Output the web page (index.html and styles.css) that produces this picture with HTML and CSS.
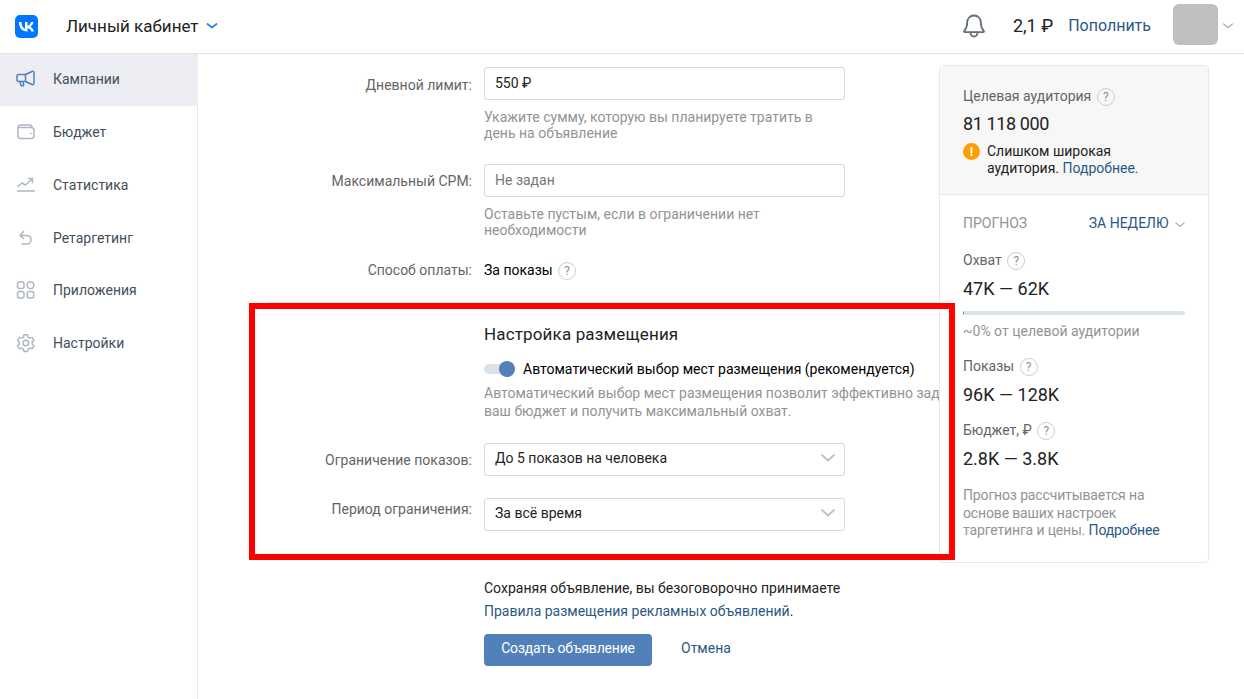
FILE: index.html
```html
<!DOCTYPE html>
<html lang="ru">
<head>
  <meta charset="UTF-8" />
  <meta name="viewport" content="width=device-width, initial-scale=1.0" />
  <title>Личный кабинет</title>
  <link rel="stylesheet" href="styles.css">
</head>
<body>
  <header class="topbar">
    <div class="brand">
      <svg class="vk-logo" width="23" height="23" viewBox="0 0 23 23">
        <rect width="23" height="23" rx="5" fill="#0077ff"/>
        <path d="M12.2 16.6c-5.2 0-8.2-3.6-8.3-9.500h2.600c.1 4.400 2 6.200 3.500 6.600V7.100h2.500v3.800c1.500-.2 3-1.900 3.500-3.800h2.500c-.4 2.300-2.100 4-3.300 4.700 1.200.6 3.100 2 3.900 4.800h-2.700c-.6-1.800-2-3.200-3.900-3.400v3.400z" fill="#fff"/>
      </svg>
      <span class="brand-title">Личный кабинет</span>
      <svg class="chevron" width="12" height="8" viewBox="0 0 12 8"><path d="M1.500 2l4.500 3.500L10.500 2" fill="none" stroke="#2b87e0" stroke-width="1.800" stroke-linecap="round"/></svg>
    </div>
    <div class="account">
      <svg class="bell" width="24" height="24" viewBox="0 0 24 24" fill="none" stroke="#626d7a" stroke-width="1.800" stroke-linejoin="round">
        <path d="M12 1.500c-4 0-6.800 3-6.800 7 0 4.500-1 6.200-3 8.500-.4.500-.1 1.100.5 1.100h18.600c.6 0 .9-.6.500-1.100-2-2.300-3-4-3-8.500 0-4-2.800-7-6.800-7z"/>
        <path d="M8.500 18.500c0 2.200 1.500 4 3.500 4s3.500-1.800 3.500-4" stroke-linecap="round"/>
      </svg>
      <span class="balance">2,1 ₽</span>
      <a class="top-up" href="#">Пополнить</a>
      <div class="avatar"></div>
      <svg class="chevron" width="12" height="8" viewBox="0 0 12 8"><path d="M1.500 2l4.500 3.500L10.500 2" fill="none" stroke="#aeb7c2" stroke-width="1.500" stroke-linecap="round"/></svg>
    </div>
  </header>

  <div class="layout">
    <nav class="sidebar">
      <a class="nav-item active" href="#">
        <svg width="22" height="22" viewBox="0 0 22 22" fill="none" stroke="#5181b8" stroke-width="1.500" stroke-linejoin="round" stroke-linecap="round">
          <path d="M2 8.500c0-1.300.9-2 2-2h6.500L17 3.500c1-.4 2 .1 2 1.200v10.600c0 1.100-1 1.600-2 1.200l-6.500-3H4c-1.100 0-2-.7-2-2z"/>
          <path d="M10.500 6.500v7M5 13.500l.8 3.500c.1.500.5.700 1 .7h1c.6 0 .9-.4.800-1l-.6-3.200"/>
        </svg>
        <span>Кампании</span>
      </a>
      <a class="nav-item" href="#">
        <svg width="22" height="22" viewBox="0 0 22 22" fill="none" stroke="#aeb7c2" stroke-width="1.500" stroke-linejoin="round" stroke-linecap="round">
          <path d="M3 6.500C3 5 4 4 5.500 4h9C16 4 17 5 17 6.500M3 6.500v8C3 16.500 4 17.500 6 17.500h10c1.500 0 3-1 3-3v-5c0-2-1.500-3-3-3z"/>
          <path d="M15.500 12.500h.5"/>
        </svg>
        <span>Бюджет</span>
      </a>
      <a class="nav-item" href="#">
        <svg width="22" height="22" viewBox="0 0 22 22" fill="none" stroke="#aeb7c2" stroke-width="1.500" stroke-linejoin="round" stroke-linecap="round">
          <path d="M3 12.500l4-3.500 3.500 2 6.500-6M13.500 4.500H17.500V8.500M2.500 17h17"/>
        </svg>
        <span>Статистика</span>
      </a>
      <a class="nav-item" href="#">
        <svg width="22" height="22" viewBox="0 0 22 22" fill="none" stroke="#aeb7c2" stroke-width="1.500" stroke-linejoin="round" stroke-linecap="round">
          <path d="M8.500 4.500L5 8.500l3.500 3M5.500 8.500h6.500c2.500 0 4 1.500 4 4s-1.800 4.500-4 4.500H7"/>
        </svg>
        <span>Ретаргетинг</span>
      </a>
      <a class="nav-item" href="#">
        <svg width="22" height="22" viewBox="0 0 22 22" fill="none" stroke="#aeb7c2" stroke-width="1.500">
          <rect x="2.500" y="3" width="6.500" height="6.500" rx="2"/>
          <circle cx="15.500" cy="6.200" r="3.400"/>
          <rect x="2.500" y="12.500" width="6.500" height="6.500" rx="2"/>
          <rect x="12.200" y="12.500" width="6.500" height="6.500" rx="2"/>
        </svg>
        <span>Приложения</span>
      </a>
      <a class="nav-item" href="#">
        <svg width="22" height="22" viewBox="0 0 22 22" fill="none" stroke="#aeb7c2" stroke-width="1.500" stroke-linejoin="round">
          <path d="M9 2.800h3.500l.6 2.300 1.700 1 2.300-.7 1.800 3-1.700 1.700v2l1.700 1.700-1.800 3-2.300-.7-1.700 1-.6 2.300H9l-.6-2.300-1.700-1-2.300.7-1.800-3L4.300 12v-2L2.600 8.400l1.800-3 2.300.7 1.700-1z"/>
          <circle cx="10.800" cy="11" r="2.800"/>
        </svg>
        <span>Настройки</span>
      </a>
    </nav>

    <main class="content">
      <div class="form">
        <div class="form-row">
          <label class="form-label label-low">Дневной лимит:</label>
          <div class="form-field">
            <div class="input">550 ₽</div>
            <p class="hint">Укажите сумму, которую вы планируете тратить в<br>день на объявление</p>
          </div>
        </div>
        <div class="form-row">
          <label class="form-label">Максимальный CPM:</label>
          <div class="form-field">
            <div class="input placeholder">Не задан</div>
            <p class="hint">Оставьте пустым, если в ограничении нет<br>необходимости</p>
          </div>
        </div>
        <div class="form-row pay-row">
          <label class="form-label">Способ оплаты:</label>
          <div class="form-field">За показы <span class="help">?</span></div>
        </div>

        <div class="placement">
          <div class="form-row intro-row">
            <div class="form-label"></div>
            <div class="form-field">
              <h3 class="section-title">Настройка размещения</h3>
              <div class="switch-row">
                <span class="switch"><span class="switch-knob"></span></span>
                Автоматический выбор мест размещения (рекомендуется)
              </div>
              <p class="hint wide">Автоматический выбор мест размещения позволит эффективно зад<br>ваш бюджет и получить максимальный охват.</p>
            </div>
          </div>
          <div class="form-row select-row">
            <label class="form-label">Ограничение показов:</label>
            <div class="form-field">
              <div class="input select">До 5 показов на человека
                <svg width="16" height="10" viewBox="0 0 16 10"><path d="M2 2l6 5.500L14 2" fill="none" stroke="#b8c1cc" stroke-width="1.800" stroke-linecap="round"/></svg>
              </div>
            </div>
          </div>
          <div class="form-row select-row">
            <label class="form-label label-high">Период ограничения:</label>
            <div class="form-field">
              <div class="input select">За всё время
                <svg width="16" height="10" viewBox="0 0 16 10"><path d="M2 2l6 5.500L14 2" fill="none" stroke="#b8c1cc" stroke-width="1.800" stroke-linecap="round"/></svg>
              </div>
            </div>
          </div>
        </div>

        <div class="form-row submit-row">
          <div class="form-label"></div>
          <div class="form-field">
            <p class="terms">Сохраняя объявление, вы безоговорочно принимаете<br><a href="#">Правила размещения рекламных объявлений</a>.</p>
            <div class="actions">
              <button class="btn-primary">Создать объявление</button>
              <a class="cancel" href="#">Отмена</a>
            </div>
          </div>
        </div>
      </div>

      <aside class="forecast">
        <div class="audience">
          <div class="metric-title">Целевая аудитория <span class="help">?</span></div>
          <div class="audience-count">81 118 000</div>
          <div class="warning">
            <span class="warning-icon">!</span>
            <span>Слишком широкая<br>аудитория. <a href="#">Подробнее.</a></span>
          </div>
        </div>
        <div class="prediction">
          <div class="prediction-head">
            <span>ПРОГНОЗ</span>
            <a href="#">ЗА НЕДЕЛЮ
              <svg width="10" height="6" viewBox="0 0 10 6"><path d="M1 1l4 3.500L9 1" fill="none" stroke="#aeb7c2" stroke-width="1.300" stroke-linecap="round"/></svg>
            </a>
          </div>
          <div class="metric-title">Охват <span class="help">?</span></div>
          <div class="metric-value">47K — 62K</div>
          <div class="progress"><div class="progress-fill" style="width: 1px"></div></div>
          <div class="progress-note">~0% от целевой аудитории</div>
          <div class="metric-title">Показы <span class="help">?</span></div>
          <div class="metric-value">96K — 128K</div>
          <div class="metric-title">Бюджет, ₽ <span class="help">?</span></div>
          <div class="metric-value">2.8K — 3.8K</div>
          <p class="forecast-note">Прогноз рассчитывается на<br>основе ваших настроек<br>таргетинга и цены. <a href="#">Подробнее</a></p>
        </div>
      </aside>
      <div class="highlight"></div>
    </main>
  </div>
</body>
</html>
```

FILE: styles.css
```css
* {
  box-sizing: border-box;
}
html, body {
  height: 100%;
}
body {
  margin: 0;
  font-family: Roboto, "Liberation Sans", sans-serif;
  font-size: 14px;
  line-height: 18px;
  background-color: #ffffff;
  color: #000000;
  overflow: hidden;
}
a {
  color: #2a5885;
  text-decoration: none;
}
p {
  margin: 0;
}

.topbar {
  height: 54px;
  border-bottom: 1px solid #e1e3e6;
  display: flex;
  justify-content: space-between;
  align-items: center;
  padding: 0 10px 1px 15px;
}
.brand {
  display: flex;
  align-items: center;
}
.brand-title {
  font-size: 17px;
  margin: 0 7px 0 28px;
  color: #222222;
}
.account {
  display: flex;
  align-items: center;
}
.bell {
  margin-right: 27px;
}
.balance {
  font-size: 18px;
  color: #222222;
  margin-right: 15px;
}
.top-up {
  font-size: 16px;
  margin-right: 22px;
}
.avatar {
  width: 45px;
  height: 41px;
  margin: -4px 4px 0 0;
  border-radius: 6px;
  background: #bfbfbf;
}

.layout {
  display: flex;
  height: 645px;
}
.sidebar {
  width: 198px;
  flex-shrink: 0;
  border-right: 1px solid #e7e8ec;
}
.nav-item {
  display: flex;
  align-items: center;
  height: 52.600px;
  padding: 0 0 1px 15px;
  color: #454f5b;
}
.nav-item svg {
  margin-right: 16px;
}
.nav-item.active {
  height: 52px;
  margin-bottom: 0.600px;
  padding-bottom: 2px;
  background: #edeef3;
}

.content {
  flex: 1;
  position: relative;
  display: flex;
}
.form {
  width: 741px;
  padding: 13px 0 0 0;
}
.form-row {
  display: flex;
  margin-bottom: 23px;
}
.form-label {
  width: 274px;
  flex-shrink: 0;
  text-align: right;
  color: #656565;
  padding-top: 8px;
  white-space: nowrap;
}
.label-low {
  padding-top: 9px;
}
.label-high {
  padding-top: 2px;
}
.form-field {
  margin-left: 12px;
  flex-shrink: 0;
  width: 455px;
}
.input {
  width: 361px;
  height: 33px;
  border: 1px solid #d3d9de;
  border-radius: 3px;
  padding: 6px 10px;
  color: #222222;
}
.placeholder {
  color: #777777;
}
.select {
  display: flex;
  justify-content: space-between;
  align-items: center;
  padding: 6px 8px 10px 10px;
}
.hint {
  color: #939393;
  margin-top: 9px;
  line-height: 16px;
  white-space: nowrap;
}
.wide {
  margin-top: 6px;
  line-height: 18px;
}
.pay-row {
  margin-bottom: 22px;
}
.pay-row .form-label {
  padding-top: 0;
}
.help {
  display: inline-flex;
  justify-content: center;
  align-items: center;
  width: 18px;
  height: 18px;
  margin-left: 2px;
  border: 1px solid #c5d0db;
  border-radius: 50%;
  font-size: 12px;
  color: #939393;
  vertical-align: middle;
}

.placement {
  border-top: 1px solid #e7e8ec;
  margin-left: 70px;
  padding-top: 20px;
}
.placement .form-label {
  width: 204px;
}
.section-title {
  margin: 0 0 15px;
  font-size: 17px;
  line-height: 22px;
  font-weight: 400;
  letter-spacing: 0.150px;
  color: #222222;
}
.switch-row {
  display: flex;
  align-items: center;
  gap: 8px;
  white-space: nowrap;
  height: 18px;
}
.switch {
  position: relative;
  display: block;
  width: 31px;
  height: 10px;
  border-radius: 5px;
  background: #dae2ea;
}
.switch-knob {
  position: absolute;
  right: 0;
  top: -3px;
  width: 16px;
  height: 16px;
  border-radius: 50%;
  background: #5181b8;
}
.select-row {
  margin-bottom: 22px;
}
.placement .intro-row {
  margin-bottom: 23px;
}

.submit-row {
  margin-top: 46px;
  margin-bottom: 0;
}
.terms {
  line-height: 23px;
  color: #222222;
}
.actions {
  display: flex;
  align-items: center;
  margin-top: 11px;
}
.btn-primary {
  width: 168px;
  height: 32px;
  padding: 0 0 4px;
  border: none;
  border-radius: 4px;
  background: #5181b8;
  color: #ffffff;
  font: inherit;
  letter-spacing: -0.2px;
}
.cancel {
  margin: 0 0 4px 29px;
}
.highlight {
  position: absolute;
  left: 51px;
  top: 249px;
  width: 706px;
  height: 257px;
  border: 6px solid #ff0000;
  pointer-events: none;
}

.forecast {
  width: 270px;
  height: 498px;
  margin-top: 11px;
  background: #ffffff;
  border: 1px solid #e7e8ec;
  border-radius: 4px;
  flex-shrink: 0;
}
.audience {
  background: #f7f7f7;
  border-bottom: 1px solid #e7e8ec;
  padding: 21px 23px 0;
  height: 129px;
}
.metric-title {
  color: #656565;
  height: 20px;
}
.audience-count {
  font-size: 18px;
  line-height: 22px;
  margin-top: 6px;
  letter-spacing: -0.4px;
  color: #222222;
}
.warning {
  display: flex;
  gap: 7px;
  margin-top: 8px;
  line-height: 17px;
  color: #222222;
}
.warning-icon {
  width: 17px;
  height: 17px;
  border-radius: 50%;
  background: #ff9e00;
  color: #ffffff;
  font-size: 13px;
  font-weight: 700;
  text-align: center;
  line-height: 17px;
  flex-shrink: 0;
}
.prediction {
  padding: 19px 23px 0;
}
.prediction-head {
  display: flex;
  justify-content: space-between;
  color: #939393;
  margin-bottom: 19px;
}
.prediction-head a svg {
  margin-left: 3px;
}
.metric-value {
  font-size: 18px;
  line-height: 22px;
  margin: 7px 0 15px;
  color: #222222;
}
.progress {
  height: 4px;
  background: #dae2ea;
  border-radius: 2px;
  overflow: hidden;
  margin-top: -4px;
}
.progress-fill {
  height: 100%;
  background: #5181b8;
}
.progress-note {
  color: #939393;
  margin: 7px 0 17px;
}
.forecast-note {
  color: #939393;
  margin-top: 17px;
  line-height: 17.500px;
  letter-spacing: -0.150px;
}
```
